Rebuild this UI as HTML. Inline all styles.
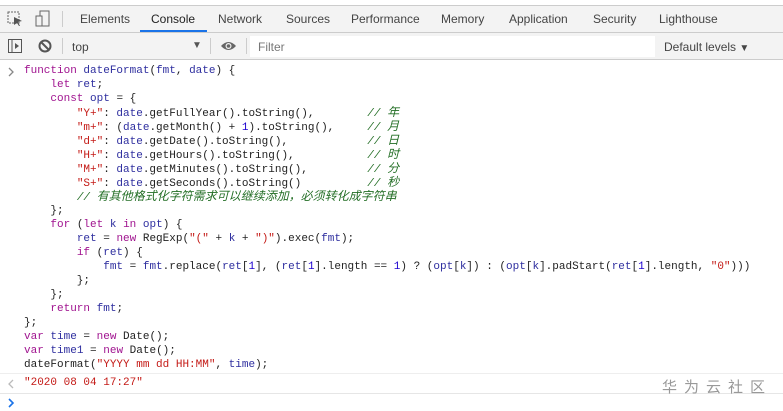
<!DOCTYPE html>
<html><head><meta charset="utf-8"><style>
*{margin:0;padding:0;box-sizing:border-box}
body{width:783px;height:411px;overflow:hidden;background:#fff;position:relative;font-family:"Liberation Sans",sans-serif}
.bar1{position:absolute;left:0;top:5px;width:783px;height:28px;background:#f3f3f3;border-top:1px solid #ccc;border-bottom:1px solid #ccc}
.bar2{position:absolute;left:0;top:33px;width:783px;height:27px;background:#f3f3f3;border-bottom:1px solid #ccc}
.t{position:absolute;top:12px;font-size:12px;color:#444}
.d{position:absolute;width:1px;background:#ccc}
.code{position:absolute;left:0;top:0;font-family:"Liberation Mono","Noto Sans CJK SC",monospace;font-size:11px;color:#222}
.l{position:absolute;white-space:pre;height:14px;line-height:14px}
.k{color:#a0138f}.v{color:#2e2e9f}.s{color:#c41a16}.n{color:#1c00cf}
.c{color:#236e25;font-style:italic}
.cj{font-size:12px}
</style></head><body>
<div class="bar1"></div>
<svg style="position:absolute;left:7px;top:11px" width="18" height="16"><rect x="1" y="1" width="11" height="11" fill="none" stroke="#666" stroke-dasharray="2 1"/><path d="M7 6 L15 10 L11 11 L13 15 L12 15 L10 12 L7 14 Z" fill="#555"/></svg>
<svg style="position:absolute;left:35px;top:10px" width="16" height="18"><rect x="5" y="1" width="9" height="15" fill="none" stroke="#666"/><rect x="1" y="6" width="6" height="10" fill="#f3f3f3" stroke="#666"/></svg>
<div class="d" style="left:62px;top:11px;height:16px"></div>
<div class="t" style="left:80px">Elements</div>
<div class="t" style="left:151px;color:#222">Console</div>
<div style="position:absolute;left:140px;top:30px;width:67px;height:2px;background:#1a73e8"></div>
<div class="t" style="left:218px">Network</div>
<div class="t" style="left:286px">Sources</div>
<div class="t" style="left:351px">Performance</div>
<div class="t" style="left:441px">Memory</div>
<div class="t" style="left:509px">Application</div>
<div class="t" style="left:593px">Security</div>
<div class="t" style="left:659px">Lighthouse</div>
<div class="bar2"></div>
<svg style="position:absolute;left:8px;top:39px" width="14" height="14"><rect x="0.5" y="0.5" width="13" height="13" fill="none" stroke="#555"/><line x1="4" y1="1" x2="4" y2="13" stroke="#555"/><path d="M7 4 L11 7 L7 10 Z" fill="#555"/></svg>
<svg style="position:absolute;left:38px;top:39px" width="14" height="14"><circle cx="7" cy="7" r="5.5" fill="none" stroke="#555" stroke-width="2"/><line x1="3" y1="3" x2="11" y2="11" stroke="#555" stroke-width="2"/></svg>
<div class="d" style="left:62px;top:38px;height:16px"></div>
<div class="t" style="left:72px;top:40px">top</div>
<div class="t" style="left:192px;top:40px;font-size:10px;color:#555">▼</div>
<div class="d" style="left:210px;top:38px;height:16px"></div>
<svg style="position:absolute;left:220px;top:40px" width="17" height="12"><path d="M1 6 Q8.5 -2 16 6 Q8.5 14 1 6Z" fill="#666"/><circle cx="8.5" cy="6" r="3" fill="#f3f3f3"/><circle cx="8.5" cy="6" r="1.8" fill="#666"/></svg>
<div class="d" style="left:246px;top:38px;height:16px"></div>
<div style="position:absolute;left:250px;top:36px;width:405px;height:21px;background:#fff"></div>
<div class="t" style="left:258px;top:40px;color:#777">Filter</div>
<div class="t" style="left:664px;top:40px">Default levels <span style="font-size:10px">▼</span></div>
<svg style="position:absolute;left:7px;top:67px" width="8" height="10"><path d="M2 1 L6 5 L2 9" fill="none" stroke="#888" stroke-width="1.3"/></svg>
<div class="code">
<div class="l" style="left:24px;top:64px"><span class="k">function</span> <span class="v">dateFormat</span>(<span class="v">fmt</span>, <span class="v">date</span>) {</div>
<div class="l" style="left:24px;top:78px">    <span class="k">let</span> <span class="v">ret</span>;</div>
<div class="l" style="left:24px;top:92px">    <span class="k">const</span> <span class="v">opt</span> = {</div>
<div class="l" style="left:24px;top:106px">        <span class="s">"Y+"</span>: <span class="v">date</span>.getFullYear().toString(),        <span class="c">// <span class="cj">年</span></span></div>
<div class="l" style="left:24px;top:120px">        <span class="s">"m+"</span>: (<span class="v">date</span>.getMonth() + <span class="n">1</span>).toString(),     <span class="c">// <span class="cj">月</span></span></div>
<div class="l" style="left:24px;top:134px">        <span class="s">"d+"</span>: <span class="v">date</span>.getDate().toString(),            <span class="c">// <span class="cj">日</span></span></div>
<div class="l" style="left:24px;top:148px">        <span class="s">"H+"</span>: <span class="v">date</span>.getHours().toString(),           <span class="c">// <span class="cj">时</span></span></div>
<div class="l" style="left:24px;top:162px">        <span class="s">"M+"</span>: <span class="v">date</span>.getMinutes().toString(),         <span class="c">// <span class="cj">分</span></span></div>
<div class="l" style="left:24px;top:176px">        <span class="s">"S+"</span>: <span class="v">date</span>.getSeconds().toString()          <span class="c">// <span class="cj">秒</span></span></div>
<div class="l" style="left:24px;top:190px">        <span class="c">// <span class="cj">有其他格式化字符需求可以继续添加，必须转化成字符串</span></span></div>
<div class="l" style="left:24px;top:204px">    };</div>
<div class="l" style="left:24px;top:218px">    <span class="k">for</span> (<span class="k">let</span> <span class="v">k</span> <span class="k">in</span> <span class="v">opt</span>) {</div>
<div class="l" style="left:24px;top:232px">        <span class="v">ret</span> = <span class="k">new</span> RegExp(<span class="s">"("</span> + <span class="v">k</span> + <span class="s">")"</span>).exec(<span class="v">fmt</span>);</div>
<div class="l" style="left:24px;top:246px">        <span class="k">if</span> (<span class="v">ret</span>) {</div>
<div class="l" style="left:24px;top:260px">            <span class="v">fmt</span> = <span class="v">fmt</span>.replace(<span class="v">ret</span>[<span class="n">1</span>], (<span class="v">ret</span>[<span class="n">1</span>].length == <span class="n">1</span>) ? (<span class="v">opt</span>[<span class="v">k</span>]) : (<span class="v">opt</span>[<span class="v">k</span>].padStart(<span class="v">ret</span>[<span class="n">1</span>].length, <span class="s">"0"</span>)))</div>
<div class="l" style="left:24px;top:274px">        };</div>
<div class="l" style="left:24px;top:288px">    };</div>
<div class="l" style="left:24px;top:302px">    <span class="k">return</span> <span class="v">fmt</span>;</div>
<div class="l" style="left:24px;top:316px">};</div>
<div class="l" style="left:24px;top:330px"><span class="k">var</span> <span class="v">time</span> = <span class="k">new</span> Date();</div>
<div class="l" style="left:24px;top:344px"><span class="k">var</span> <span class="v">time1</span> = <span class="k">new</span> Date();</div>
<div class="l" style="left:24px;top:358px">dateFormat(<span class="s">"YYYY mm dd HH:MM"</span>, <span class="v">time</span>);</div>
<div class="l" style="left:24px;top:376px"><span class="s">"2020 08 04 17:27"</span></div>
</div>
<svg style="position:absolute;left:7px;top:379px" width="8" height="10"><path d="M6 1 L2 5 L6 9" fill="none" stroke="#bbb" stroke-width="1.3"/></svg>
<div style="position:absolute;left:0;top:373px;width:783px;height:1px;background:#eee"></div>
<div style="position:absolute;left:0;top:393px;width:783px;height:1px;background:#e6e6e6"></div>
<svg style="position:absolute;left:7px;top:398px" width="8" height="10"><path d="M2 1 L6 5 L2 9" fill="none" stroke="#1a73e8" stroke-width="1.6"/></svg>
<div style="position:absolute;left:662px;top:376px;font-family:'Noto Sans CJK SC',sans-serif;font-size:15px;letter-spacing:7px;color:#999">华为云社区</div>
</body></html>
